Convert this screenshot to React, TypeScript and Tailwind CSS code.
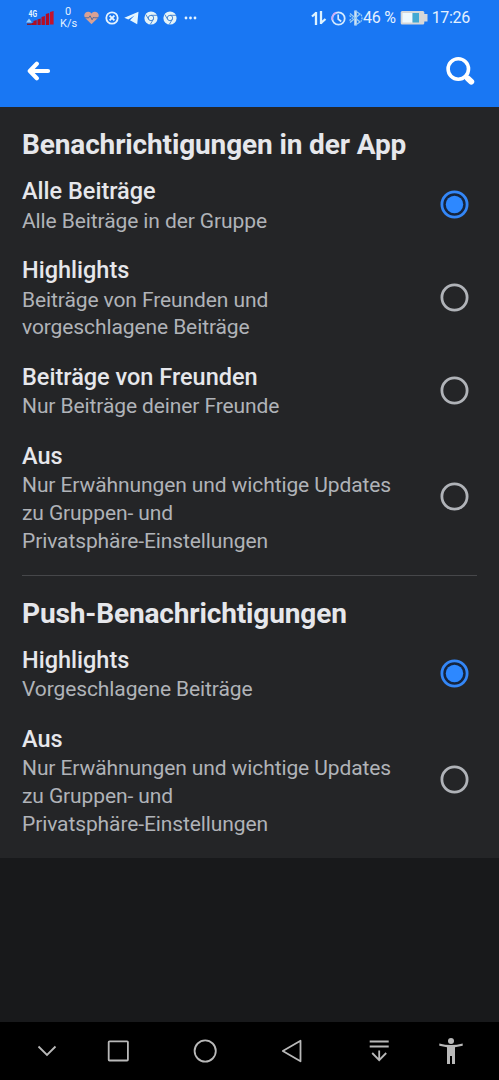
type Option = { title: string; lines: string[]; selected?: boolean };

const inAppOptions: Option[] = [
  { title: "Alle Beiträge", lines: ["Alle Beiträge in der Gruppe"], selected: true },
  { title: "Highlights", lines: ["Beiträge von Freunden und", "vorgeschlagene Beiträge"] },
  { title: "Beiträge von Freunden", lines: ["Nur Beiträge deiner Freunde"] },
  {
    title: "Aus",
    lines: ["Nur Erwähnungen und wichtige Updates", "zu Gruppen- und", "Privatsphäre-Einstellungen"],
  },
];

const pushOptions: Option[] = [
  { title: "Highlights", lines: ["Vorgeschlagene Beiträge"], selected: true },
  {
    title: "Aus",
    lines: ["Nur Erwähnungen und wichtige Updates", "zu Gruppen- und", "Privatsphäre-Einstellungen"],
  },
];

export default function App() {
  return (
    <div className="flex h-[1080px] w-[499px] flex-col overflow-hidden bg-[#18191b] font-[Roboto,sans-serif]">
      <header className="h-[107px] shrink-0 bg-[#1977f3] text-white">
        <StatusBar />
        <div className="flex h-[69px] items-center justify-between pr-[23px] pl-[27px]">
          <svg width="24" height="20" viewBox="0 0 24 20" fill="none" stroke="currentColor" strokeWidth="4.2" strokeLinecap="round" strokeLinejoin="round">
            <path d="M21 10H3.5M9.8 2.8 2.8 10l7 7.2" />
          </svg>
          <svg width="31" height="30" viewBox="0 0 31 30" fill="none" stroke="currentColor" strokeLinecap="round">
            <circle cx="13.3" cy="13" r="10.2" strokeWidth="3.6" />
            <path d="m20.5 20.5 2 2" strokeWidth="4" />
            <path d="m23 22.6 3.2 3" strokeWidth="6" />
          </svg>
        </div>
      </header>

      <main className="h-[751px] shrink-0 bg-[#242527]">
        <Section title="Benachrichtigungen in der App" options={inAppOptions} />
        <hr className="mx-[22px] mt-[10.5px] border-[#46474a]" />
        <Section title="Push-Benachrichtigungen" options={pushOptions} />
      </main>

      <NavBar />
    </div>
  );
}

function Section({ title, options }: { title: string; options: Option[] }) {
  return (
    <section className="pt-[22px]">
      <h2 className="mb-1 pl-[22px] text-[28px] leading-8 font-bold tracking-[-0.13px] whitespace-nowrap text-[#e6e7eb]">{title}</h2>
      {options.map((option) => (
        <OptionRow key={option.title} option={option} />
      ))}
    </section>
  );
}

function OptionRow({ option }: { option: Option }) {
  return (
    <div className="flex items-center justify-between pr-[30px] pl-[22px]">
      <div className="pt-3 pb-[8.8px] whitespace-nowrap">
        <h3 className="mb-[2.5px] text-[23.5px] leading-7 font-medium text-[#e6e7eb]">{option.title}</h3>
        {option.lines.map((line) => (
          <p key={line} className="text-[21px] leading-[27.7px] tracking-[-0.1px] text-[#b0b3b8]">
            {line}
          </p>
        ))}
      </div>
      {option.selected ? (
        <svg width="29" height="29" viewBox="0 0 29 29">
          <circle cx="14.5" cy="14.5" r="12.6" fill="#15253f" stroke="#3487f7" strokeWidth="2.8" />
          <circle cx="14.5" cy="14.5" r="8.7" fill="#2d88ff" />
        </svg>
      ) : (
        <svg width="29" height="29" viewBox="0 0 29 29">
          <circle cx="14.5" cy="14.5" r="12.6" fill="none" stroke="#b0b3b8" strokeWidth="2.8" />
        </svg>
      )}
    </div>
  );
}

function StatusBar() {
  return (
    <div className="flex h-9 items-center pr-[29px] pl-[26px] whitespace-nowrap">
      {/* Signal */}
      <svg width="29" height="18" viewBox="0 0 29 18" className="shrink-0">
        <path d="M1 14.5h4V16H1z" fill="#801f35" />
        <path d="M5.5 14h3v2H5z" fill="#9c1028" />
        <path d="m7.5 12 3.2-1v5H7z" fill="#b00d25" />
        <path d="m11.5 10.5 3.2-1V16h-3.2z" fill="#a90d26" />
        <path d="m15.5 8 3.4-1v9h-3.4z" fill="#b70d24" />
        <path d="m19.8 5 3.4-1v12h-3.4z" fill="#b30b22" />
        <path d="m24 3 3.6-1v13.5H24z" fill="#c4122b" />
        <path d="m0 13.5 3-4 3 4z" fill="#8fd0ff" />
        <text x="2.5" y="8" fontSize="9.5" fontWeight="700" fill="#e5f5ff" textLength="8.5" lengthAdjust="spacingAndGlyphs">
          4G
        </text>
      </svg>
      <div className="ml-[5px] w-4 text-center text-[11px] leading-[12.5px] text-[#e4f1ff]">
        <div>0</div>
        <div>K/s</div>
      </div>
      {/* Heart rate */}
      <svg width="15" height="14" viewBox="0 0 15 14" className="ml-[8px] shrink-0">
        <path d="M7.5 13.3 1.4 7.2C-1.5 3.8 1.7.4 4.4.7c1.4 0 2.4.8 3.1 1.9C8.2 1.5 9.2.7 10.6.7c2.7-.3 5.9 3.1 3 6.5z" fill="#d8a194" />
        <path d="M.8 6.8h4l1.3-2 2 4 1.5-2.8.8.8h3.8" fill="none" stroke="#4d6b9e" strokeWidth="1" />
      </svg>
      <svg width="14" height="14" viewBox="0 0 14 14" className="ml-[6px] shrink-0" fill="none" stroke="#e4f3ff">
        <circle cx="7" cy="7" r="5.7" strokeWidth="1.8" />
        <path d="m4.6 4.6 4.8 4.8M9.4 4.6 4.6 9.4" strokeWidth="1.9" />
      </svg>
      {/* Telegram */}
      <svg width="15" height="14" viewBox="0 0 15 14" className="ml-[5px] shrink-0" fill="#e4f6ff">
        <path d="M14.5.8.3 6.7l4 1.8L10.5 4.5 6 9.3l7.2 4z" />
      </svg>
      <Chrome className="ml-[5px] shrink-0" />
      <Chrome className="ml-[5px] shrink-0" />
      <svg width="14" height="4" viewBox="0 0 14 4" className="mb-px ml-[7px] shrink-0" fill="#e4f3ff">
        <circle cx="2" cy="2" r="1.4" />
        <circle cx="6.5" cy="2" r="1.4" />
        <circle cx="11" cy="2" r="1.4" />
      </svg>

      <div className="ml-auto flex items-center">
        {/* Data arrows */}
        <svg width="16" height="16" viewBox="0 0 16 16" fill="none" stroke="#ddf2ff">
          <path d="M5 15V2M5.5 2.5 1 6.5" strokeWidth="2.3" />
          <path d="M10 1v13M9.5 13.5l5-4.5" strokeWidth="2.3" />
        </svg>
        <svg width="15" height="15" viewBox="0 0 15 15" className="ml-[4px]" fill="none" stroke="#d3eaff">
          <circle cx="7.5" cy="7.5" r="6.2" strokeWidth="1.8" />
          <path d="M1.3 9a6.2 6.2 0 0 1 4-7.3" stroke="#cda9f7" strokeWidth="1.8" />
          <path d="M7.2 3.5V8l3 2.5" strokeWidth="1.7" />
        </svg>
        {/* Bluetooth */}
        <svg width="15" height="16" viewBox="0 0 15 16" className="ml-[2px]" fill="none" stroke="#9bcdf2">
          <path d="M7.5.5v15" stroke="#d0e4f5" strokeWidth="2.5" />
          <path d="m2 3.5 10 8.500-4.500 3M2 12.500 12 4 7.500 1" strokeWidth="1.3" />
          <path d="M13 4.500q2 3.500 0 7M1.500 5.500l3 2.500-3 2.500" strokeWidth="1.3" strokeDasharray="2 1" />
        </svg>
        <span className="text-[16px] tracking-[-0.25px] text-[#e4f1ff]">46 %</span>
        <svg width="28" height="15" viewBox="0 0 28 15" className="mb-px ml-[4px]">
          <rect x=".7" y="1" width="23.6" height="13.5" rx="1.5" fill="#d6d7d8" />
          <path d="M24 4h3.500v7.500H24z" fill="#d3d6db" />
          <path d="M2.500 3h10v9.500h-10z" fill="#eef9ff" />
          <path d="M12.500 3h6.500v9.500h-6.500z" fill="#43a9d3" />
        </svg>
        <span className="ml-[4px] text-[16px] tracking-[-0.3px] text-[#e4f1ff]">17:26</span>
      </div>
    </div>
  );
}

function Chrome({ className }: { className: string }) {
  return (
    <svg width="14" height="14" viewBox="0 0 14 14" className={className}>
      <circle cx="7" cy="7" r="6.6" fill="#e4f3f8" />
      <g fill="none" stroke="#3d7fd0" strokeWidth=".9">
        <circle cx="7" cy="7" r="2.7" />
        <path d="M7 4.3h6M4.7 8.4 1.8 3.5M9.3 8.4l-3 5" />
      </g>
    </svg>
  );
}

function NavBar() {
  return (
    <nav className="mt-auto flex h-[58px] shrink-0 items-center bg-black pl-[37px] text-[#b9b9b9]">
      <svg width="20" height="26" viewBox="0 0 20 26" fill="none" stroke="currentColor" strokeWidth="1.8">
        <path d="m1.5 8.5 8.5 8.5 8.5-8.5" />
      </svg>
      <svg width="26" height="26" viewBox="0 0 26 26" className="ml-12" fill="none" stroke="currentColor" strokeWidth="1.8">
        <rect x="3.7" y="3.3" width="19.2" height="19.2" rx=".8" />
      </svg>
      <svg width="26" height="26" viewBox="0 0 26 26" className="ml-[61px]" fill="none" stroke="currentColor" strokeWidth="1.8">
        <circle cx="13.2" cy="13" r="10.6" />
      </svg>
      <svg width="26" height="26" viewBox="0 0 26 26" className="ml-[61px]" fill="none" stroke="currentColor" strokeWidth="1.8" strokeLinejoin="round">
        <path d="M21.5 2.7v20.6L3.8 13z" />
      </svg>
      <svg width="20" height="26" viewBox="0 0 20 26" className="ml-16" fill="none" stroke="currentColor" strokeWidth="1.8">
        <path d="M.7 3.5h19M.7 8.5h19M10.2 12.500v9.700M3.200 15l7 7.200 7-7.200" />
      </svg>
      <svg width="26" height="28" viewBox="0 0 26 28" className="ml-[49px]" fill="currentColor">
        <circle cx="13" cy="4" r="3" />
        <path d="M1.300 6.500Q13 9.500 24.700 6.500v2.300L17 10.300V27h-3v-8h-2v8H9V10.300L1.300 8.800z" />
      </svg>
    </nav>
  );
}
